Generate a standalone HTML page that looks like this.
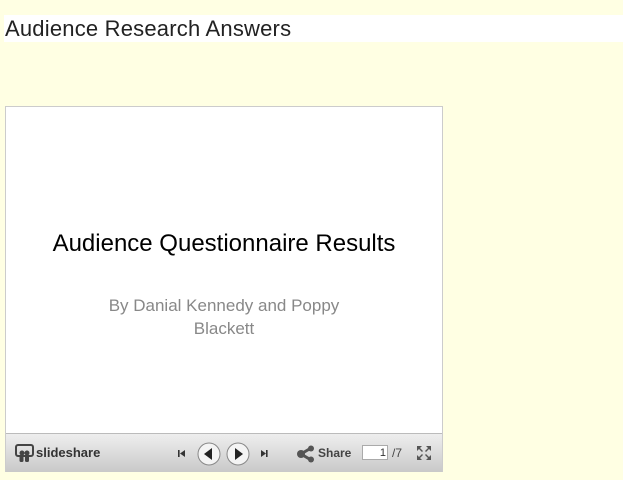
<!DOCTYPE html>
<html><head><meta charset="utf-8"><style>
body{margin:0;width:623px;height:480px;background:#ffffe3;font-family:"Liberation Sans",sans-serif;position:relative;overflow:hidden}
.hdr{position:absolute;left:4px;top:15px;width:619px;height:27px;background:#fff;font-size:22px;letter-spacing:0.2px;color:#222;line-height:27px;padding-left:1px}
.box{position:absolute;left:5px;top:106px;width:436px;height:364px;border:1px solid #ccc;background:#fff}
.t1{position:absolute;left:0;width:436px;top:123px;text-align:center;font-size:24px;color:#000}
.t2{position:absolute;left:0;width:436px;top:187px;text-align:center;font-size:17px;color:#888;line-height:23px}
.bar{position:absolute;left:0;top:326px;width:436px;height:38px;background:linear-gradient(#eee,#c9c9c9);border-top:1px solid #bbb}
.bar *{position:absolute}
</style></head><body>
<div class="hdr">Audience Research Answers</div>
<div class="box">
<div class="t1">Audience Questionnaire Results</div>
<div class="t2">By Danial Kennedy and Poppy<br>Blackett</div>
<div class="bar">
<svg style="left:9px;top:10px" width="20" height="20" viewBox="0 0 20 20"><rect x="1" y="1" width="17" height="11" rx="2" fill="none" stroke="#444" stroke-width="2"/><circle cx="7" cy="9" r="2.5" fill="#444"/><circle cx="12" cy="9" r="2.5" fill="#444"/><rect x="4.5" y="11" width="4" height="7" rx="1.5" fill="#444"/><rect x="10" y="11" width="4" height="7" rx="1.5" fill="#444"/></svg>
<span style="left:30px;top:11px;font-size:13px;color:#333;font-weight:bold">slideshare</span>
<svg style="left:170px;top:8px" width="110" height="24" viewBox="0 0 110 24">
<rect x="2" y="8" width="1.6" height="7" fill="#333"/><path d="M9 8v7l-5-3.5z" fill="#333"/>
<circle cx="33" cy="12" r="11" fill="#f4f4f4" stroke="#888"/><path d="M36 6v12l-8-6z" fill="#222"/>
<circle cx="62" cy="12" r="11" fill="#f4f4f4" stroke="#888"/><path d="M59 6v12l8-6z" fill="#222"/>
<path d="M85 8v7l5-3.5z" fill="#333"/><rect x="90" y="8" width="1.6" height="7" fill="#333"/>
</svg>
<svg style="left:290px;top:11px" width="20" height="18" viewBox="0 0 20 18"><line x1="5" y1="9" x2="15" y2="3" stroke="#555" stroke-width="3"/><line x1="5" y1="9" x2="15" y2="15" stroke="#555" stroke-width="3"/><circle cx="5" cy="9" r="4" fill="#555"/><circle cx="15" cy="3.5" r="3" fill="#555"/><circle cx="15" cy="14.5" r="3" fill="#555"/></svg>
<span style="left:312px;top:12px;font-size:12px;color:#444;font-weight:bold">Share</span>
<div style="left:356px;top:11px;width:26px;height:15px;background:#fff;border:1px solid #aaa;font-size:11px;text-align:right;line-height:15px;padding-right:1px;box-sizing:border-box;color:#333">1</div>
<span style="left:386px;top:12px;font-size:12px;color:#444">/7</span>
<svg style="left:410px;top:11px" width="16" height="16" viewBox="0 0 16 16" fill="#555"><path d="M1 1h5l-2 2 3 3-1 1-3-3-2 2zM15 1v5l-2-2-3 3-1-1 3-3-2-2zM1 15v-5l2 2 3-3 1 1-3 3 2 2zM15 15h-5l2-2-3-3 1-1 3 3 2-2z"/></svg>
</div>
</div>
</body></html>
